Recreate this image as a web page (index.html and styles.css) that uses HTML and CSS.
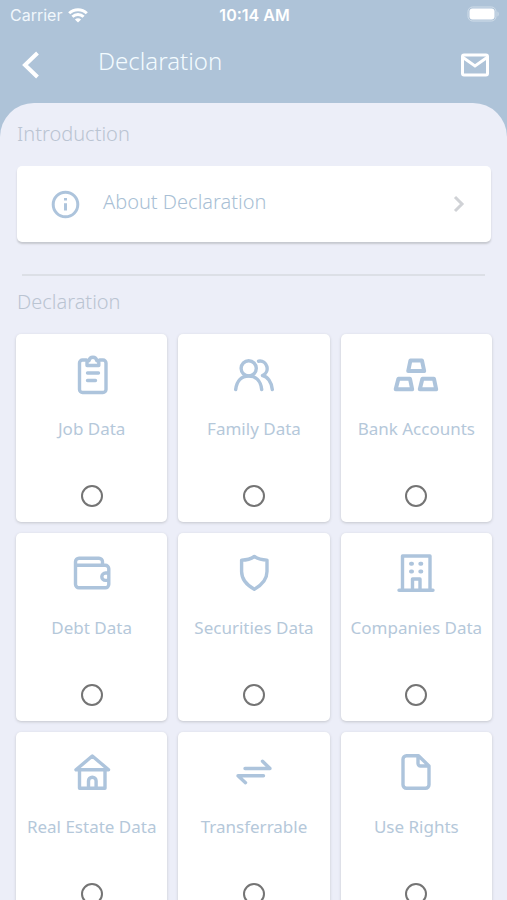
FILE: index.html
```html
<!DOCTYPE html>
<html lang="en">
<head>
<meta charset="utf-8">
<meta name="viewport" content="width=device-width, initial-scale=1">
<title>Declaration</title>
<link rel="stylesheet" href="styles.css">
</head>
<body>
<header class="top">
  <div class="status">
    <div class="carrier">
      <span>Carrier</span>
      <svg class="wifi" viewBox="0 0 20 15" aria-hidden="true"><path d="M1.2 5.3a12.6 12.6 0 0 1 17.6 0M4.4 8.7a8 8 0 0 1 11.2 0"/><path class="fill" d="M6.9 11.6a4.5 4.5 0 0 1 6.2 0L10 14.6z"/></svg>
    </div>
    <time class="clock">10:14 AM</time>
    <svg class="battery" viewBox="0 0 34 16" aria-hidden="true"><rect class="shell" x="3" y="0" width="28" height="14" rx="4.5"/><rect class="charge" x="4.500" y="1.500" width="25" height="11" rx="3"/><path class="tip" d="M32.500 4.500c1.500.5 1.500 4.500 0 5z"/></svg>
  </div>
  <nav class="bar">
    <button class="icon-button" type="button" aria-label="Back"><svg class="back" viewBox="0 0 28 28"><path d="M19.500 4 7 16l12.500 12"/></svg></button>
    <h1 class="title">Declaration</h1>
    <button class="icon-button" type="button" aria-label="Messages"><svg class="mail" viewBox="0 0 28 28"><rect x="1.500" y="6" width="25" height="20" rx="1.500"/><path d="m2 8.500 12 8.500 12-8.500"/></svg></button>
  </nav>
</header>
<main class="sheet">
  <h2 class="section">Introduction</h2>
  <a class="about" href="#about">
    <svg class="info" viewBox="0 0 28 28" aria-hidden="true"><circle cx="14.500" cy="14.500" r="12.300"/><path d="M14.500 13.200v7.200M14.500 8v2.600"/></svg>
    <span class="about-text">About Declaration</span>
    <svg class="chevron" viewBox="0 0 12 18" aria-hidden="true"><path d="m2 2 7 7-7 7"/></svg>
  </a>
  <hr class="rule">
  <h2 class="section">Declaration</h2>
  <div class="grid">
    <label class="card">
      <svg class="icon" viewBox="0 0 44 44" aria-hidden="true"><path d="M16.500 7h-4a3 3 0 0 0-3 3v26.500a3 3 0 0 0 3 3h20.500a3 3 0 0 0 3-3V10a3 3 0 0 0-3-3h-3.500"/><path d="M17 12.500V9.500q0-1.700 2-1.700c.8-4.700 7-4.700 7.800 0q2 0 2 1.700v3z"/><path d="M17.500 20h11M17.500 27.500h8"/></svg>
      <span class="name">Job Data</span><input class="pick" type="radio" name="section">
    </label>
    <label class="card">
      <svg class="icon" viewBox="0 0 44 44" aria-hidden="true"><circle cx="16.700" cy="15.300" r="7.600"/><path d="M3.700 36.500c1-9 6-13.500 13-13.500s12 4.500 13 13.500M26.500 8.200c9-1.500 12 11 4 14.300 5 1 9 6.500 9.800 14"/></svg>
      <span class="name">Family Data</span><input class="pick" type="radio" name="section">
    </label>
    <label class="card">
      <svg class="icon ingots" viewBox="0 0 44 44" aria-hidden="true"><path d="M16.400 7.600h11.600l2.200 10.500H14.200zM4.400 25.800h11.600l2.200 10.500H1.700zM28.400 25.800h11.600l2.200 10.500H25.800z"/></svg>
      <span class="name">Bank Accounts</span><input class="pick" type="radio" name="section">
    </label>
    <label class="card">
      <svg class="icon" viewBox="0 0 44 44" aria-hidden="true"><path d="M5.500 13.300h29.500a3.500 3.500 0 0 1 3.800 3.500v15.500a3.500 3.500 0 0 1-3.800 3.500H9a3.500 3.500 0 0 1-3.500-3.500V9.800A3.500 3.500 0 0 1 9 6.300h20a3.500 3.500 0 0 1 3.500 3.500v3M38.500 21h-3a3.700 3.700 0 0 0 0 7.400h3"/></svg>
      <span class="name">Debt Data</span><input class="pick" type="radio" name="section">
    </label>
    <label class="card">
      <svg class="icon" viewBox="0 0 44 44" aria-hidden="true"><path d="M22.300 4.500c-3.500 2.500-8 3.600-12.700 3.600v11.500c0 8.500 5 13.500 12.700 17.700C30 33 35 28 35 19.600V8.100c-4.700 0-9.200-1.100-12.700-3.600z"/></svg>
      <span class="name">Securities Data</span><input class="pick" type="radio" name="section">
    </label>
    <label class="card">
      <svg class="icon" viewBox="0 0 44 44" aria-hidden="true"><path d="M8.500 38V4h27.500v34M5 38.200h34M18.500 38V27h7.500v11"/><path class="windows" d="M17 11.800h1M26.300 11.800h1M17 19.400h1M26.300 19.400h1"/></svg>
      <span class="name">Companies Data</span><input class="pick" type="radio" name="section">
    </label>
    <label class="card">
      <svg class="icon" viewBox="0 0 44 44" aria-hidden="true"><path d="M22.300 5 6 18.800h32.600zM9.500 19v18.200H35V19M18.500 37v-7a3.800 3.800 0 0 1 7.600 0v7"/></svg>
      <span class="name">Real Estate Data</span><input class="pick" type="radio" name="section">
    </label>
    <label class="card">
      <svg class="icon" viewBox="0 0 44 44" aria-hidden="true"><path d="M13 17.500h25l-7.500-7.300M31.500 24.700H6l7.500 7"/></svg>
      <span class="name">Transferrable</span><input class="pick" type="radio" name="section">
    </label>
    <label class="card">
      <svg class="icon" viewBox="0 0 44 44" aria-hidden="true"><path d="M24.500 4.700H12.500a3.500 3.500 0 0 0-3.500 3.500v25.600a3.500 3.500 0 0 0 3.500 3.500h19a3.500 3.500 0 0 0 3.500-3.500V15zM24 5v7.500a2.500 2.500 0 0 0 2.500 2.500H35"/></svg>
      <span class="name">Use Rights</span><input class="pick" type="radio" name="section">
    </label>
  </div>
</main>
</body>
</html>
```
FILE: styles.css
```css
* { box-sizing: border-box; }
html { scrollbar-width: none; }
body {
  margin: 0;
  background: #aec3d8;
  font-family: "Noto Sans", "Open Sans", sans-serif;
  font-weight: 300;
}
svg { display: block; fill: none; overflow: visible; }

.status {
  display: grid;
  grid-template-columns: 1fr auto 1fr;
  align-items: center;
  height: 30px;
  padding: 0 8px 0 10px;
  color: #fff;
  font: 400 16px/20px Inter, sans-serif;
}
.carrier { display: flex; align-items: center; gap: 6px; color: #f1f7fc; }
.wifi { width: 20px; height: 15px; stroke: #fff; stroke-width: 3; }
.wifi .fill { fill: #fff; stroke: none; }
.clock { font-weight: 600; }
.battery { width: 34px; height: 16px; justify-self: end; }
.shell { stroke: #d0dde9; stroke-width: 1; }
.charge { fill: #fff; }
.tip { fill: #d0dde9; }

.bar { display: flex; align-items: center; height: 73px; padding: 0 18px 7px; }
.icon-button { padding: 0; border: 0; background: none; }
.back, .mail { width: 28px; height: 28px; stroke: #fff; stroke-width: 3; }
.back { stroke-width: 4; }
.title {
  flex: 1;
  margin: 0 0 4px;
  padding-left: 52px;
  color: #f3fbff;
  font-size: 24px;
  line-height: 32px;
  font-weight: 300;
}

.sheet {
  min-height: calc(100vh - 103px);
  padding: 17px 15px 11px;
  border-radius: 34px 34px 0 0;
  background: #eceef8;
}
.section {
  margin: 0 2px;
  color: #bac4d2;
  font-size: 20px;
  line-height: 28px;
  font-weight: 300;
}
.about {
  display: flex;
  align-items: center;
  height: 76px;
  margin: 18px 1px 32px 2px;
  padding: 0 26px 0 34px;
  border-radius: 5px;
  background: #fff;
  box-shadow: 0 2px 2px #c6c8cf;
  color: #a9bfd5;
  text-decoration: none;
}
.info { width: 28px; height: 28px; stroke: #adc4dc; stroke-width: 3; }
.about-text { flex: 1; padding: 0 0 5px 24px; font-size: 20px; line-height: 28px; }
.chevron { width: 12px; height: 18px; stroke: #d0d2d6; stroke-width: 3; }
.rule { height: 2px; margin: 0 7px 12px; border: 0; background: #dcdfe6; }

.grid { display: grid; grid-template-columns: repeat(3, 1fr); gap: 11px; padding: 18px 0 0 1px; }
.card {
  display: flex;
  flex-direction: column;
  align-items: center;
  height: 188px;
  padding: 19px 0 15px;
  border-radius: 5px;
  background: #fff;
  box-shadow: 0 1px 3px #c4c6cd;
}
.icon {
  width: 44px;
  height: 44px;
  stroke: #adc4dc;
  stroke-width: 3.4;
  stroke-linecap: round;
  stroke-linejoin: round;
}
.ingots { stroke-width: 4; }
.windows { stroke-width: 4; }
.name { margin-top: 20px; color: #b5c8da; font-size: 17px; font-weight: 400; line-height: 24px; white-space: nowrap; }
.pick {
  appearance: none;
  width: 22px;
  height: 22px;
  margin: auto 0 0;
  border: 2px solid #747474;
  border-radius: 50%;
}
.pick:checked { background: radial-gradient(#747474 40%, transparent 45%); }
```
